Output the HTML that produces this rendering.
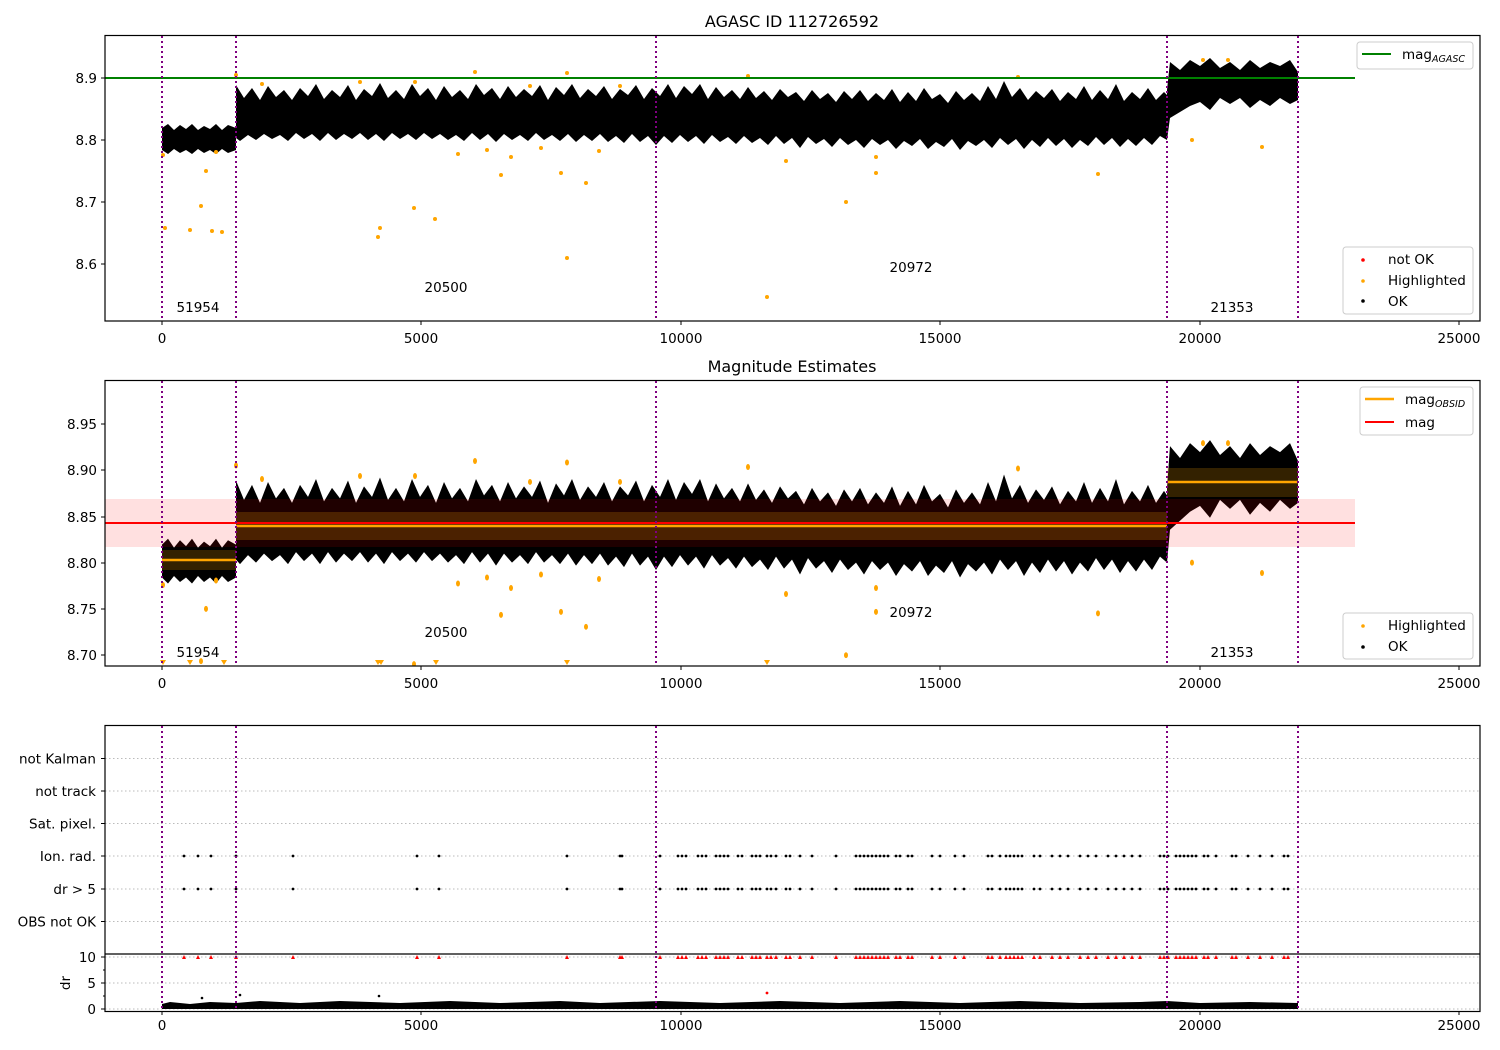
<!DOCTYPE html>
<html><head><meta charset="utf-8"><style>
html,body{margin:0;padding:0;background:#fff;}
svg{display:block;font-family:"DejaVu Sans","Liberation Sans",sans-serif;}
</style></head><body>
<svg id="s" width="1500" height="1050" viewBox="0 0 1500 1050" xmlns="http://www.w3.org/2000/svg">
<defs>
<clipPath id="c1"><rect x="105" y="36" width="1375" height="285"/></clipPath>
<clipPath id="c2"><rect x="105" y="381" width="1375" height="285"/></clipPath>
<path id="band" fill="#000" d="M162,128 L168,124 L174,130 L180,125 L186,129 L192,124 L198,130 L204,126 L210,129 L216,124 L222,130 L228,125 L236,128 L236,150 L228,153 L222,149 L216,154 L210,150 L204,153 L198,149 L192,154 L186,150 L180,153 L174,149 L168,154 L162,150 Z
M236,85 244,98 252,88 260,100 268,86 276,97 284,90 292,100 300,88 308,96 316,84 324,99 332,90 340,97 348,85 356,100 364,89 372,96 380,83 388,98 396,90 404,99 412,84 420,96 428,88 436,100 444,86 452,97 460,90 468,99 476,84 484,95 492,88 500,99 508,86 516,97 524,89 532,96 540,85 548,100 556,87 564,95 572,84 580,98 588,89 596,96 604,86 612,99 620,89 628,95 636,85 644,99 652,88 660,96 668,84 676,98 684,86 692,94 700,84 708,99 716,87 724,97 732,90 740,99 748,87 756,98 764,91 772,100 780,89 788,97 796,92 804,101 812,90 820,99 828,93 836,102 844,91 852,99 860,90 868,101 876,93 884,100 892,89 900,102 908,92 916,101 924,88 932,99 940,94 948,103 956,91 964,100 972,93 980,101 988,86 996,99 1004,81 1012,97 1020,88 1028,100 1036,91 1044,98 1052,89 1060,101 1068,92 1076,99 1084,86 1092,100 1100,90 1108,99 1116,84 1124,101 1132,92 1140,99 1148,88 1156,100 1164,92 1167,95
L1167,140 1160,136 1152,145 1144,138 1136,146 1128,139 1120,147 1112,138 1104,145 1096,137 1088,146 1080,140 1072,148 1064,139 1056,146 1048,138 1040,147 1032,140 1024,149 1016,139 1008,145 1000,138 992,148 984,140 976,146 968,141 960,150 952,139 944,147 936,142 928,149 920,139 912,146 904,141 896,149 888,140 880,145 872,139 864,148 856,140 848,145 840,138 832,147 824,139 816,144 808,137 800,148 792,138 784,144 776,136 768,145 760,138 752,143 744,136 736,144 728,137 720,142 712,135 704,144 696,136 688,142 680,135 672,143 664,136 656,145 648,136 640,142 632,134 624,143 616,136 608,142 600,134 592,141 584,135 576,142 568,134 560,141 552,135 544,140 536,133 528,141 520,135 512,140 504,134 496,142 488,134 480,140 472,133 464,141 456,135 448,140 440,134 432,139 424,133 416,140 408,134 400,139 392,133 384,141 376,134 368,140 360,133 352,139 344,134 336,140 328,133 320,141 312,134 304,139 296,133 288,141 280,135 272,139 264,134 256,140 248,135 240,141 236,138 Z
M1167,90 L1170,62 1180,70 1190,60 1200,66 1210,58 1220,68 1230,62 1240,70 1250,60 1260,68 1270,62 1280,66 1290,60 1298,72 L1298,100 1290,104 1280,98 1270,106 1260,100 1250,108 1240,98 1230,104 1220,98 1210,110 1200,102 1190,106 1180,112 1170,118 1167,140 Z"/>
<g id="orng" fill="#ffa500">
<circle cx="163" cy="155" r="2"/><circle cx="165" cy="228" r="2"/><circle cx="190" cy="230" r="2"/><circle cx="201" cy="206" r="2"/><circle cx="206" cy="171" r="2"/><circle cx="212" cy="231" r="2"/><circle cx="222" cy="232" r="2"/><circle cx="216" cy="152" r="2"/><circle cx="378" cy="237" r="2"/><circle cx="380" cy="228" r="2"/><circle cx="414" cy="208" r="2"/><circle cx="435" cy="219" r="2"/><circle cx="458" cy="154" r="2"/><circle cx="487" cy="150" r="2"/><circle cx="501" cy="175" r="2"/><circle cx="511" cy="157" r="2"/><circle cx="541" cy="148" r="2"/><circle cx="561" cy="173" r="2"/><circle cx="567" cy="258" r="2"/><circle cx="586" cy="183" r="2"/><circle cx="599" cy="151" r="2"/><circle cx="767" cy="297" r="2"/><circle cx="786" cy="161" r="2"/><circle cx="846" cy="202" r="2"/><circle cx="876" cy="157" r="2"/><circle cx="876" cy="173" r="2"/><circle cx="1098" cy="174" r="2"/><circle cx="1192" cy="140" r="2"/><circle cx="1262" cy="147" r="2"/><circle cx="236" cy="75" r="2"/><circle cx="475" cy="72" r="2"/><circle cx="567" cy="73" r="2"/><circle cx="748" cy="76" r="2"/><circle cx="1018" cy="77" r="2"/><circle cx="1203" cy="60" r="2"/><circle cx="1228" cy="60" r="2"/><circle cx="360" cy="82" r="2"/><circle cx="415" cy="82" r="2"/><circle cx="262" cy="84" r="2"/><circle cx="530" cy="86" r="2"/><circle cx="620" cy="86" r="2"/>
</g>
</defs>
<rect width="1500" height="1050" fill="#fff"/>
<text x="792" y="27" font-size="16" text-anchor="middle">AGASC ID 112726592</text>
<text x="792" y="372" font-size="16" text-anchor="middle">Magnitude Estimates</text>

<!-- PLOT 1 -->
<g>
<g clip-path="url(#c1)">
<use href="#band"/>
<use href="#orng"/>
</g>
<line x1="105" y1="78" x2="1355" y2="78" stroke="#008000" stroke-width="2"/>
<g font-size="13.5" fill="#000">
<text x="198" y="312" text-anchor="middle">51954</text>
<text x="446" y="292" text-anchor="middle">20500</text>
<text x="911" y="272" text-anchor="middle">20972</text>
<text x="1232" y="312" text-anchor="middle">21353</text>
</g>
<g font-size="13.5" text-anchor="end">
<text x="97" y="83">8.9</text><text x="97" y="145">8.8</text><text x="97" y="207">8.7</text><text x="97" y="269">8.6</text>
</g>
<g stroke="#000"><line x1="101" y1="78" x2="105" y2="78"/><line x1="101" y1="140" x2="105" y2="140"/><line x1="101" y1="202" x2="105" y2="202"/><line x1="101" y1="264" x2="105" y2="264"/></g>
<rect x="1357" y="42" width="116" height="27" rx="3" fill="#fff" stroke="#ccc"/>
<line x1="1362" y1="54" x2="1391" y2="54" stroke="#008000" stroke-width="2"/>
<text x="1402" y="59" font-size="13.5">mag<tspan font-size="9.5" font-style="italic" dy="3">AGASC</tspan></text>
<rect x="1343" y="247" width="130" height="67" rx="3" fill="#fff" stroke="#ccc"/>
<circle cx="1363" cy="260" r="1.8" fill="red"/><circle cx="1363" cy="281" r="1.8" fill="#ffa500"/><circle cx="1363" cy="301" r="1.8" fill="#000"/>
<g font-size="13.5"><text x="1388" y="264">not OK</text><text x="1388" y="285">Highlighted</text><text x="1388" y="306">OK</text></g>
<rect x="105" y="35.5" width="1375" height="285.5" fill="none" stroke="#000" stroke-width="1.2"/>
</g>

<!-- PLOT 2 -->
<g>
<g clip-path="url(#c2)">
<g transform="translate(0,353.5) scale(1,1.4935)"><use href="#band"/></g>
<rect x="105" y="499" width="1250" height="48" fill="red" opacity="0.12"/>
<rect x="162" y="550" width="74" height="20" fill="#ffa500" opacity="0.2"/>
<rect x="236" y="512" width="931" height="28" fill="#ffa500" opacity="0.2"/>
<rect x="1167" y="468" width="131" height="29" fill="#ffa500" opacity="0.2"/>
<line x1="105" y1="523" x2="1355" y2="523" stroke="red" stroke-width="2"/>
<line x1="162" y1="560" x2="236" y2="560" stroke="#ffa500" stroke-width="2.5"/>
<line x1="236" y1="526" x2="1167" y2="526" stroke="#ffa500" stroke-width="2.5"/>
<line x1="1167" y1="482" x2="1298" y2="482" stroke="#ffa500" stroke-width="2.5"/>
<g transform="translate(0,353.5) scale(1,1.4935)"><use href="#orng"/></g>
</g>
<g fill="#ffa500"><path d="M160,660 h6 l-3,5 z M187,660 h6 l-3,5 z M221,660 h6 l-3,5 z M375,660 h6 l-3,5 z M378,660 h6 l-3,5 z M433,660 h6 l-3,5 z M564,660 h6 l-3,5 z M764,660 h6 l-3,5 z"/></g>
<g font-size="13.5">
<text x="198" y="657" text-anchor="middle">51954</text>
<text x="446" y="637" text-anchor="middle">20500</text>
<text x="911" y="617" text-anchor="middle">20972</text>
<text x="1232" y="657" text-anchor="middle">21353</text>
</g>
<g font-size="13.5" text-anchor="end">
<text x="97" y="429">8.95</text><text x="97" y="475">8.90</text><text x="97" y="522">8.85</text><text x="97" y="568">8.80</text><text x="97" y="614">8.75</text><text x="97" y="660">8.70</text>
</g>
<g stroke="#000"><line x1="101" y1="424" x2="105" y2="424"/><line x1="101" y1="470" x2="105" y2="470"/><line x1="101" y1="517" x2="105" y2="517"/><line x1="101" y1="563" x2="105" y2="563"/><line x1="101" y1="609" x2="105" y2="609"/><line x1="101" y1="655" x2="105" y2="655"/></g>
<rect x="1360" y="387" width="113" height="48" rx="3" fill="#fff" stroke="#ccc"/>
<line x1="1365" y1="399" x2="1394" y2="399" stroke="#ffa500" stroke-width="2.5"/>
<line x1="1365" y1="422" x2="1394" y2="422" stroke="red" stroke-width="2"/>
<text x="1405" y="404" font-size="13.5">mag<tspan font-size="9.5" font-style="italic" dy="3">OBSID</tspan></text>
<text x="1405" y="427" font-size="13.5">mag</text>
<rect x="1343" y="613" width="130" height="46" rx="3" fill="#fff" stroke="#ccc"/>
<circle cx="1363" cy="626" r="1.8" fill="#ffa500"/><circle cx="1363" cy="647" r="1.8" fill="#000"/>
<g font-size="13.5"><text x="1388" y="630">Highlighted</text><text x="1388" y="651">OK</text></g>
<rect x="105" y="380.5" width="1375" height="285.5" fill="none" stroke="#000" stroke-width="1.2"/>
</g>

<!-- PLOT 3 -->
<g>
<g stroke="#bbb" stroke-dasharray="1.5,2.5" stroke-width="1">
<line x1="105" y1="758.5" x2="1480" y2="758.5"/><line x1="105" y1="791" x2="1480" y2="791"/><line x1="105" y1="823.5" x2="1480" y2="823.5"/><line x1="105" y1="856" x2="1480" y2="856"/><line x1="105" y1="889" x2="1480" y2="889"/><line x1="105" y1="921.5" x2="1480" y2="921.5"/>
<line x1="105" y1="957" x2="1480" y2="957"/><line x1="105" y1="983" x2="1480" y2="983"/><line x1="105" y1="1009" x2="1480" y2="1009"/>
</g>
<g id="ev"></g>
<path d="M162,1004 L170,1002 L190,1004 L210,1002 L236,1003 L260,1001 L300,1003 L340,1001 L400,1003 L450,1001 L500,1003 L560,1001 L600,1003 L660,1001 L720,1003 L780,1001 L840,1003 L900,1001 L960,1003 L1020,1001 L1080,1003 L1140,1002 L1167,1001 L1200,1003 L1250,1002 L1298,1003 L1298,1009 L162,1009 Z" fill="#000"/>
<g fill="#000"><circle cx="202" cy="998" r="1.3"/><circle cx="240" cy="995" r="1.3"/><circle cx="379" cy="996" r="1.3"/></g>
<circle cx="767" cy="993" r="1.4" fill="red"/>
<g font-size="13.5" text-anchor="end">
<text x="96" y="763.5">not Kalman</text><text x="96" y="796">not track</text><text x="96" y="828.5">Sat. pixel.</text><text x="96" y="861">Ion. rad.</text><text x="96" y="894">dr &gt; 5</text><text x="96" y="926.5">OBS not OK</text>
<text x="96" y="962">10</text><text x="96" y="988">5</text><text x="96" y="1014">0</text>
</g>
<text transform="translate(70,983) rotate(-90)" font-size="13.5" text-anchor="middle">dr</text>
<g stroke="#000">
<line x1="101" y1="758.5" x2="105" y2="758.5"/><line x1="101" y1="791" x2="105" y2="791"/><line x1="101" y1="823.5" x2="105" y2="823.5"/><line x1="101" y1="856" x2="105" y2="856"/><line x1="101" y1="889" x2="105" y2="889"/><line x1="101" y1="921.5" x2="105" y2="921.5"/>
<line x1="101" y1="957" x2="105" y2="957"/><line x1="101" y1="983" x2="105" y2="983"/><line x1="101" y1="1009" x2="105" y2="1009"/>
<line x1="103" y1="970" x2="105" y2="970"/><line x1="103" y1="996" x2="105" y2="996"/>
</g>
<rect x="105" y="725.5" width="1375" height="286" fill="none" stroke="#000" stroke-width="1.2"/>
<line x1="105" y1="954" x2="1480" y2="954" stroke="#000" stroke-width="1.2"/>
</g>

<!-- vertical dotted lines -->
<g stroke="#800080" stroke-width="2" stroke-dasharray="2,3">
<line x1="162" y1="36" x2="162" y2="321"/><line x1="236" y1="36" x2="236" y2="321"/><line x1="656" y1="36" x2="656" y2="321"/><line x1="1167" y1="36" x2="1167" y2="321"/><line x1="1298" y1="36" x2="1298" y2="321"/>
<line x1="162" y1="381" x2="162" y2="666"/><line x1="236" y1="381" x2="236" y2="666"/><line x1="656" y1="381" x2="656" y2="666"/><line x1="1167" y1="381" x2="1167" y2="666"/><line x1="1298" y1="381" x2="1298" y2="666"/>
<line x1="162" y1="726" x2="162" y2="1011"/><line x1="236" y1="726" x2="236" y2="1011"/><line x1="656" y1="726" x2="656" y2="1011"/><line x1="1167" y1="726" x2="1167" y2="1011"/><line x1="1298" y1="726" x2="1298" y2="1011"/>
</g>

<!-- x ticks -->
<g stroke="#000">
<line x1="162" y1="321" x2="162" y2="325"/><line x1="421" y1="321" x2="421" y2="325"/><line x1="681" y1="321" x2="681" y2="325"/><line x1="940" y1="321" x2="940" y2="325"/><line x1="1200" y1="321" x2="1200" y2="325"/><line x1="1459" y1="321" x2="1459" y2="325"/>
<line x1="162" y1="666" x2="162" y2="670"/><line x1="421" y1="666" x2="421" y2="670"/><line x1="681" y1="666" x2="681" y2="670"/><line x1="940" y1="666" x2="940" y2="670"/><line x1="1200" y1="666" x2="1200" y2="670"/><line x1="1459" y1="666" x2="1459" y2="670"/>
<line x1="162" y1="1011" x2="162" y2="1015"/><line x1="421" y1="1011" x2="421" y2="1015"/><line x1="681" y1="1011" x2="681" y2="1015"/><line x1="940" y1="1011" x2="940" y2="1015"/><line x1="1200" y1="1011" x2="1200" y2="1015"/><line x1="1459" y1="1011" x2="1459" y2="1015"/>
</g>
<g font-size="13.5" text-anchor="middle">
<text x="162" y="343">0</text><text x="421" y="343">5000</text><text x="681" y="343">10000</text><text x="940" y="343">15000</text><text x="1200" y="343">20000</text><text x="1459" y="343">25000</text>
<text x="162" y="688">0</text><text x="421" y="688">5000</text><text x="681" y="688">10000</text><text x="940" y="688">15000</text><text x="1200" y="688">20000</text><text x="1459" y="688">25000</text>
<text x="162" y="1030">0</text><text x="421" y="1030">5000</text><text x="681" y="1030">10000</text><text x="940" y="1030">15000</text><text x="1200" y="1030">20000</text><text x="1459" y="1030">25000</text>
</g>
</svg>
<script>
(function(){
var xs=[184,198,211,236,293,417,439,567,620,622,660,678,682,686,698,702,706,716,720,724,728,738,742,752,756,760,767,771,776,786,790,800,812,836,856,860,864,868,872,876,880,884,888,896,900,908,912,932,940,955,964,988,992,1000,1006,1010,1014,1018,1022,1034,1040,1052,1060,1068,1080,1088,1096,1108,1116,1124,1132,1140,1160,1164,1168,1176,1180,1184,1188,1192,1196,1204,1208,1216,1232,1236,1248,1260,1272,1284,1288];
var g=document.getElementById('ev'),h='';
xs.forEach(function(x){
 h+='<circle cx="'+x+'" cy="856" r="1.4" fill="#000"/><circle cx="'+x+'" cy="889" r="1.4" fill="#000"/>';
 h+='<path d="M'+(x-2)+',959 L'+(x+2)+',959 L'+x+',955 Z" fill="red"/>';
});
g.innerHTML=h;
})();
</script>
</body></html>
